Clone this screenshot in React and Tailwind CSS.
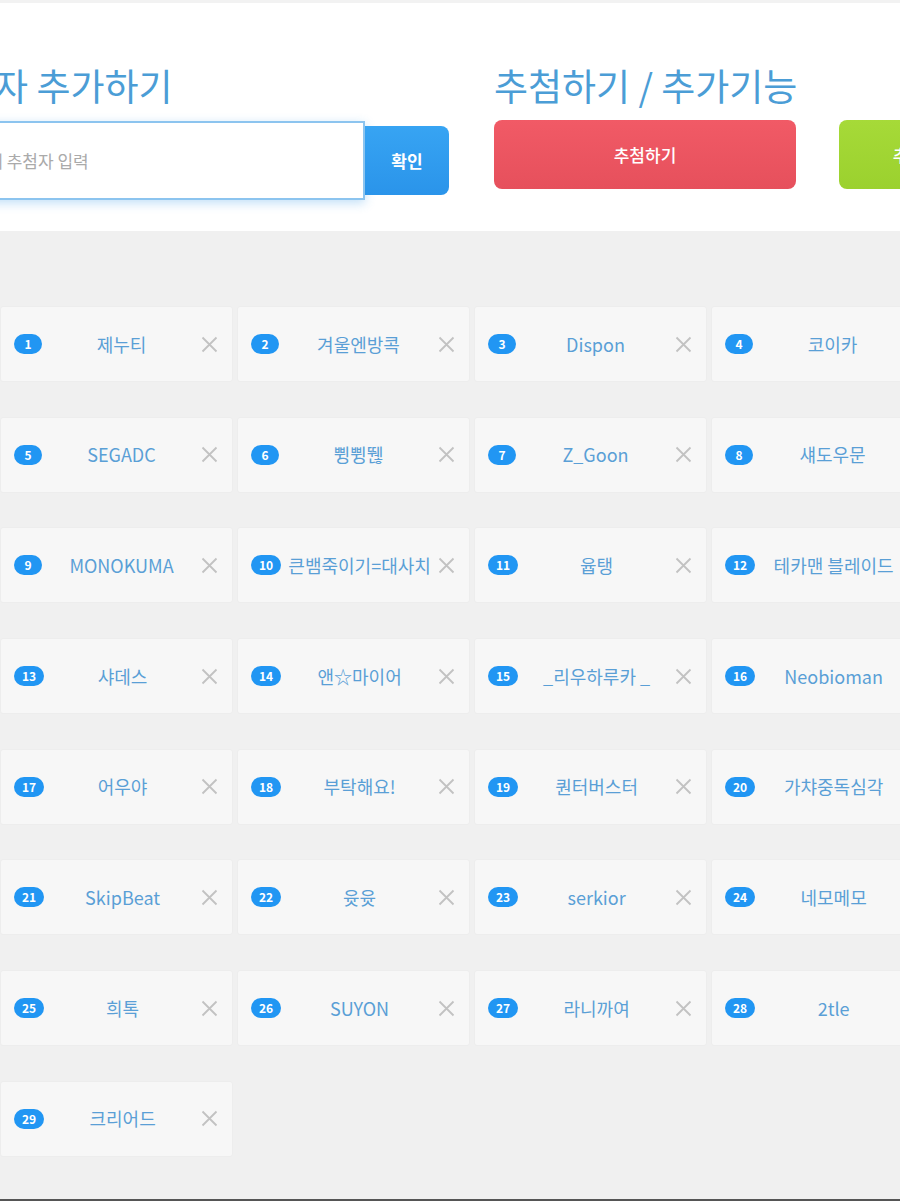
import React from 'react';

const names = [
  '제누티', '겨울엔방콕', 'Dispon', '코이카',
  'SEGADC', '쀵쀵뛚', 'Z_Goon', '섀도우문',
  'MONOKUMA', '큰뱀죽이기=대사치', '윱탱', '테카맨 블레이드',
  '샤데스', '앤☆마이어', '_리우하루카 _', 'Neobioman',
  '어우야', '부탁해요!', '퀀터버스터', '가챠중독심각',
  'SkipBeat', '윳윳', 'serkior', '네모메모',
  '희톡', 'SUYON', '라니까여', '2tle',
  '크리어드',
];

function Entry({ no, name }) {
  return (
    <div className="flex h-[76px] items-center rounded-[3px] border border-[#ededed] bg-[#f7f7f7] pl-[13px] pr-[14px]">
      <span className="flex h-[20px] min-w-[28px] shrink-0 items-center justify-center rounded-full bg-[#2196f3] px-[8px] text-[12px] font-bold text-white">
        {no}
      </span>
      <span className="min-w-0 flex-1 whitespace-nowrap text-center text-[18px] text-[#5a9fd6]">
        {name}
      </span>
      <svg width="17" height="17" viewBox="0 0 17 17" className="shrink-0">
        <path d="M1.5 1.5 L15.5 15.5 M15.5 1.5 L1.5 15.5" stroke="#c2c2c2" strokeWidth="1.8" />
      </svg>
    </div>
  );
}

export default function App() {
  return (
    <div
      className="flex h-[1201px] flex-col overflow-hidden border-b-2 border-[#555] bg-[#f0f0f0]"
      style={{ fontFamily: '"Noto Sans CJK KR", "Noto Sans", sans-serif' }}
    >
      <div className="h-[3px] bg-[#f2f2f2]" />

      {/* Header */}
      <div className="flex h-[228px] shrink-0 bg-white pt-[62px]">
        <div className="ml-[-74px] w-[523px] shrink-0">
          <h2 className="text-[37px] leading-[40px] text-[#4b9dd6]">추첨자 추가하기</h2>
          <div className="mt-[16px] flex items-center">
            <div className="flex h-[79px] w-[439px] items-center border-2 border-[#8cc4ef] bg-white pl-[28px] shadow-[0_3px_10px_rgba(45,150,230,0.3)]">
              <span className="text-[17px] text-[#aaaaaa]">여기에 추첨자 입력</span>
            </div>
            <button className="h-[69px] w-[84px] rounded-r-[8px] bg-gradient-to-b from-[#37a4f3] to-[#2a94ea] text-[17px] font-bold text-white">
              확인
            </button>
          </div>
        </div>

        <div className="ml-[45px] shrink-0">
          <h2 className="text-[37px] leading-[40px] text-[#4b9dd6]">추첨하기 / 추가기능</h2>
          <div className="mt-[15px] flex gap-[43px]">
            <button className="h-[69px] w-[302px] rounded-[8px] bg-gradient-to-b from-[#f15a66] to-[#e6505c] text-[17px] font-medium text-white">
              추첨하기
            </button>
            <button className="h-[69px] w-[170px] rounded-[8px] bg-gradient-to-b from-[#a6da38] to-[#9bd12e] text-[17px] font-medium text-white">
              추가기능
            </button>
          </div>
        </div>
      </div>

      {/* List */}
      <div className="flex-1 pt-[75px]">
        <div className="grid grid-cols-[repeat(4,233px)] gap-x-[4px] gap-y-[34.7px]">
          {names.map((n, i) => (
            <Entry key={i} no={i + 1} name={n} />
          ))}
        </div>
      </div>
    </div>
  );
}
